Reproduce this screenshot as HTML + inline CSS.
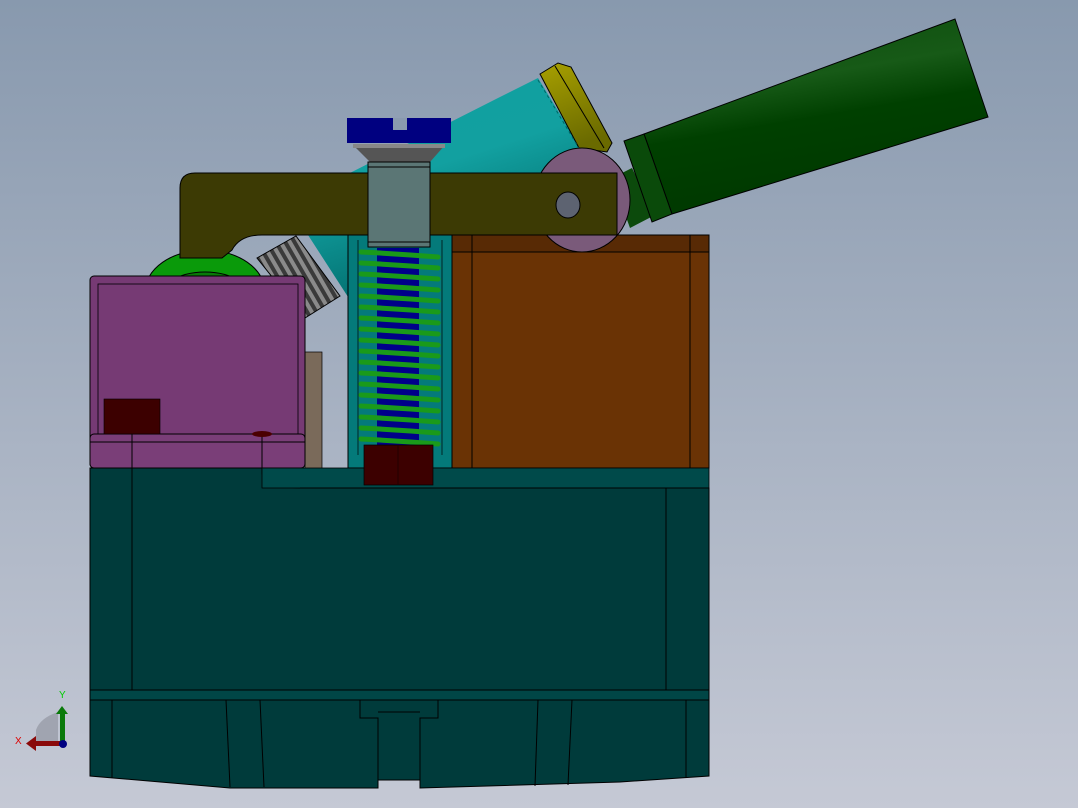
<!DOCTYPE html>
<html><head><style>
html,body{margin:0;padding:0;width:1078px;height:808px;overflow:hidden}
svg{display:block}
</style></head><body>
<svg width="1078" height="808" viewBox="0 0 1078 808" xmlns="http://www.w3.org/2000/svg">
<defs>
<linearGradient id="bg" x1="0" y1="0" x2="0" y2="1">
<stop offset="0" stop-color="#8899ae"/><stop offset="1" stop-color="#c5c9d5"/></linearGradient>
<linearGradient id="gcyl" x1="0" y1="0" x2="0.3" y2="1">
<stop offset="0" stop-color="#0a4a0a"/><stop offset="0.4" stop-color="#175a17"/><stop offset="0.6" stop-color="#004000"/><stop offset="1" stop-color="#003800"/></linearGradient>
<linearGradient id="tcyl" x1="0" y1="0" x2="0.4" y2="1">
<stop offset="0" stop-color="#0fa0a0"/><stop offset="0.5" stop-color="#12a0a0"/><stop offset="1" stop-color="#006868"/></linearGradient>
<linearGradient id="ycap" x1="0" y1="0" x2="0.3" y2="1">
<stop offset="0" stop-color="#a8a000"/><stop offset="1" stop-color="#6a6a00"/></linearGradient>
<pattern id="thr" width="8" height="8" patternUnits="userSpaceOnUse" patternTransform="rotate(-30)">
<rect width="8" height="8" fill="#3a3a3a"/><rect width="4" height="8" fill="#8a8a8a"/></pattern>
</defs>
<rect width="1078" height="808" fill="url(#bg)"/>

<!-- green cylinder -->
<polygon points="612,178 632,168 655,215 630,228" fill="#0c4a0c"/>
<polygon points="644,134 955,19 988,117 672,214" fill="url(#gcyl)" stroke="#000" stroke-width="1"/>
<polygon points="624,141 644,134 672,214 652,222" fill="#0a4a0a" stroke="#000" stroke-width="1"/>

<!-- teal cylinder -->
<polygon points="340,178 498,98 538,78 582,150 560,205 440,245 350,300 308,235" fill="url(#tcyl)"/>
<polygon points="540,74 558,63 571,67 612,143 607,152 579,148" fill="url(#ycap)" stroke="#000" stroke-width="1"/>
<line x1="555" y1="66" x2="604" y2="148" stroke="#000"/>
<line x1="538" y1="80" x2="580" y2="150" stroke="#066" stroke-dasharray="3,3"/>

<!-- screw head -->
<rect x="347" y="118" width="104" height="25" fill="#000080"/>
<rect x="393" y="118" width="14" height="12" fill="#8a9aae"/>
<polygon points="353,145 445,145 430,162 370,162" fill="#555"/>
<rect x="353" y="144" width="92" height="4" fill="#888"/>

<!-- teal behind spring -->
<rect x="348" y="235" width="104" height="233" fill="#047a7a" stroke="#000" stroke-width="1"/>
<line x1="358" y1="240" x2="358" y2="455" stroke="#000" stroke-width="0.7"/>
<line x1="442" y1="240" x2="442" y2="455" stroke="#000" stroke-width="0.7"/>

<!-- orange block -->
<rect x="452" y="235" width="257" height="233" fill="#6a3305" stroke="#000" stroke-width="1"/>
<rect x="452" y="235" width="257" height="17" fill="#582a05" stroke="#000" stroke-width="1"/>
<line x1="472" y1="235" x2="472" y2="468" stroke="#000"/>
<line x1="690" y1="235" x2="690" y2="468" stroke="#000"/>

<!-- pink disk -->
<ellipse cx="582" cy="200" rx="48" ry="52" fill="#7a5a7a" stroke="#000"/>

<!-- green ring -->
<ellipse cx="205" cy="292" rx="60" ry="42" fill="#0a9a0a" stroke="#000"/>
<ellipse cx="205" cy="304" rx="50" ry="32" fill="#087a08" stroke="#000"/>

<!-- thread piece -->
<polygon points="257,258 296,236 340,296 305,318" fill="url(#thr)" stroke="#000"/>

<!-- lever -->
<path d="M195,173 L617,173 L617,235 L262,235 Q240,235 232,250 L222,258 L180,258 L180,188 Q180,173 195,173 Z" fill="#3c3a04" stroke="#000"/>
<ellipse cx="568" cy="205" rx="12" ry="13" fill="#5d6371" stroke="#000"/>

<!-- gray block -->
<rect x="368" y="162" width="62" height="85" fill="#5b7675" stroke="#000"/>
<line x1="368" y1="167" x2="430" y2="167" stroke="#000"/>
<line x1="368" y1="242" x2="430" y2="242" stroke="#000"/>

<!-- spring rod -->
<rect x="377" y="248" width="42" height="200" fill="#00008a"/>
<g stroke="#1a9a1a" stroke-width="5" stroke-linecap="round" fill="none">
<path d="M361,252 Q400,254 438,257"/><path d="M361,263 Q400,265 438,268"/><path d="M361,274 Q400,276 438,279"/>
<path d="M361,285 Q400,287 438,290"/><path d="M361,296 Q400,298 438,301"/><path d="M361,307 Q400,309 438,312"/>
<path d="M361,318 Q400,320 438,323"/><path d="M361,329 Q400,331 438,334"/><path d="M361,340 Q400,342 438,345"/>
<path d="M361,351 Q400,353 438,356"/><path d="M361,362 Q400,364 438,367"/><path d="M361,373 Q400,375 438,378"/>
<path d="M361,384 Q400,386 438,389"/><path d="M361,395 Q400,397 438,400"/><path d="M361,406 Q400,408 438,411"/>
<path d="M361,417 Q400,419 438,422"/><path d="M361,428 Q400,430 438,433"/><path d="M361,439 Q400,441 438,444"/>
</g>

<!-- tan strip -->
<rect x="305" y="352" width="17" height="133" fill="#7a6a5a" stroke="#000" stroke-width="0.7"/>

<!-- pink block -->
<rect x="90" y="276" width="215" height="192" rx="4" fill="#763a74" stroke="#000"/>
<rect x="98" y="284" width="200" height="150" fill="none" stroke="#000" stroke-width="0.8"/>
<rect x="90" y="434" width="215" height="34" rx="4" fill="#7a3e78" stroke="#000"/>
<line x1="90" y1="442" x2="305" y2="442" stroke="#000"/>
<line x1="132" y1="434" x2="132" y2="468" stroke="#000"/>
<line x1="262" y1="434" x2="262" y2="468" stroke="#000"/>
<rect x="104" y="399" width="56" height="35" fill="#3c0000" stroke="#000" stroke-width="0.6"/>
<ellipse cx="262" cy="434" rx="10" ry="3" fill="#4a0000"/>

<!-- base -->
<path d="M90,468 L262,468 L262,474 Q280,488 300,488 L709,488 L709,698 L90,698 Z" fill="#003b3b" stroke="#000"/>
<rect x="262" y="468" width="447" height="20" fill="#004a4a" stroke="#000" stroke-width="0.8"/>
<line x1="300" y1="488" x2="709" y2="488" stroke="#000"/>
<line x1="132" y1="468" x2="132" y2="698" stroke="#000"/>
<line x1="666" y1="488" x2="666" y2="698" stroke="#000"/>
<rect x="90" y="690" width="619" height="10" fill="#004646" stroke="#000"/>
<path d="M90,700 L709,700 L709,776 L620,782 L420,788 L420,780 L378,780 L378,788 L230,788 L90,776 Z" fill="#003b3b" stroke="#000"/>
<g stroke="#000" fill="none" stroke-width="1">
<line x1="112" y1="700" x2="112" y2="778"/><line x1="226" y1="700" x2="230" y2="787"/><line x1="260" y1="700" x2="264" y2="787"/>
<line x1="538" y1="700" x2="535" y2="786"/><line x1="572" y1="700" x2="568" y2="785"/><line x1="686" y1="700" x2="686" y2="778"/>
<path d="M360,700 L360,718 L378,718 L378,780 M420,780 L420,718 L438,718 L438,700"/>
<line x1="378" y1="712" x2="420" y2="712"/>
</g>

<!-- bottom nut -->
<rect x="364" y="445" width="69" height="40" fill="#3c0000" stroke="#000" stroke-width="0.7"/>
<line x1="398" y1="445" x2="398" y2="485" stroke="#200" />

<!-- triad -->
<path d="M36,745 L36,730 Q40,718 58,712 L58,745 Z" fill="#a0a4b0"/>
<rect x="60" y="712" width="5" height="33" fill="#0a7a0a"/>
<polygon points="56,714 62,706 68,714" fill="#0a7a0a"/>
<rect x="34" y="741" width="28" height="5" fill="#8a0a0a"/>
<polygon points="36,736 26,743.5 36,751" fill="#8a0a0a"/>
<circle cx="63" cy="744" r="4" fill="#000080"/>
<text x="59" y="698" font-family="Liberation Sans, sans-serif" font-size="10" fill="#0c0">Y</text>
<text x="15" y="744" font-family="Liberation Sans, sans-serif" font-size="10" fill="#d00">X</text>
</svg>
</body></html>
